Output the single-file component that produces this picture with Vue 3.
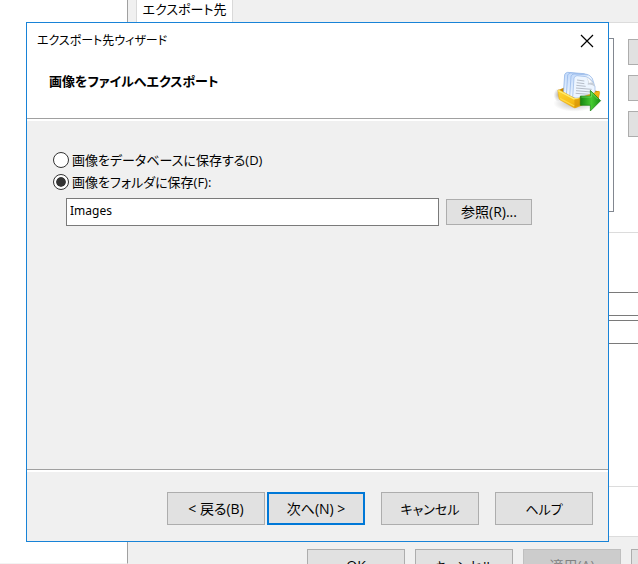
<script setup>
import { ref } from 'vue'

const target = ref('folder')
const folder = ref('Images')
</script>

<template>
  <div class="desktop">
    <div class="backdrop">
      <div class="side-pane"></div>
      <div class="settings">
        <div class="tab-bar">
          <button type="button" class="tab">エクスポート先</button>
        </div>
        <div class="page">
          <div class="list-row">
            <div class="list-box"></div>
            <div class="list-tools">
              <span class="tool"></span>
              <span class="tool"></span>
              <span class="tool"></span>
            </div>
          </div>
          <div class="group">
            <div class="field"></div>
            <div class="field"></div>
          </div>
          <div class="group-end"></div>
        </div>
        <div class="settings-footer">
          <button type="button" class="btn">OK</button>
          <button type="button" class="btn kana">キャンセル</button>
          <button type="button" class="btn" disabled>適用(A)</button>
          <span class="btn"></span>
        </div>
      </div>
    </div>

    <section class="dialog" role="dialog" aria-labelledby="dialog-title">
      <header class="dialog-header">
        <div class="title-bar">
          <span id="dialog-title">エクスポート先ウィザード</span>
          <button type="button" class="close" aria-label="閉じる">
            <svg width="14" height="14" viewBox="0 0 14 14">
              <path d="M1 1L13 13M13 1L1 13" stroke="#000" stroke-width="1.2" fill="none" />
            </svg>
          </button>
        </div>
        <div class="banner">
          <h1>画像をファイルへエクスポート</h1>
          <svg class="tray" width="50" height="44" viewBox="39 33 150 132" aria-hidden="true">
            <defs>
              <linearGradient id="gold" x1="0" y1="0" x2="1" y2="1">
                <stop offset="0" stop-color="#ffd83a" />
                <stop offset="0.5" stop-color="#f7bd16" />
                <stop offset="1" stop-color="#d28d00" />
              </linearGradient>
              <linearGradient id="green" x1="0" y1="0" x2="1" y2="0">
                <stop offset="0" stop-color="#168510" />
                <stop offset="0.55" stop-color="#47ca32" />
                <stop offset="1" stop-color="#189014" />
              </linearGradient>
              <linearGradient id="sheet" x1="0" y1="0" x2="1" y2="1">
                <stop offset="0" stop-color="#bdd6fa" />
                <stop offset="0.5" stop-color="#eef6ff" />
                <stop offset="1" stop-color="#c3d6ee" />
              </linearGradient>
              <radialGradient id="shade">
                <stop offset="0" stop-color="#8a8a8a" stop-opacity="0.6" />
                <stop offset="1" stop-color="#8a8a8a" stop-opacity="0" />
              </radialGradient>
            </defs>
            <ellipse cx="104" cy="130" rx="64" ry="25" fill="url(#shade)" />
            <ellipse cx="55" cy="105" rx="14" ry="20" fill="url(#shade)" />
            <path d="M54 91L78 80L178 94L176 116L103 126Z" fill="#c78500" />
            <path d="M70 103L74 44Q76 38 83 37L132 41Q147 46 148 62V112L100 115Z" fill="url(#sheet)" stroke="#81a9e2" stroke-width="2" />
            <path d="M79 106L83 45Q85 40 92 39L141 43Q154 49 155 65V112L105 115Z" fill="url(#sheet)" stroke="#8db1e5" stroke-width="2" />
            <path d="M89 110L93 48Q95 43 102 42L147 45Q159 52 161 68V112L110 115Z" fill="url(#sheet)" stroke="#8db1e5" stroke-width="2" />
            <path d="M98 112L102 54Q104 48 111 47L138 50Q159 58 165 80V114H106Z" fill="#edf5ff" stroke="#91b4e5" stroke-width="2" />
            <path d="M137 50Q158 58 165 81Q157 71 143 74Q147 59 137 50Z" fill="#c6cdd7" />
            <path d="M137 50Q150 56 158 68Q150 66 146 70Q147 58 137 50Z" fill="#f8fbff" />
            <path d="M111 60L133 63M110 68L133 71M109 76L137 79M108 84L155 88M108 92L153 96M107 100L148 103" stroke="#b6bdc8" stroke-width="3" />
            <path d="M53 91Q55 87 61 91L103 114Q108 117 114 115L176 94Q180 94 179 99L176 115L108 143Q104 145 99 142L60 120Q56 117 56 112Z" fill="url(#gold)" stroke="#d8960b" stroke-width="1" />
            <path d="M55 92L103 117L116 115" fill="none" stroke="#ffeb70" stroke-width="4" />
            <path d="M60 115L103 138" stroke="#ffd847" stroke-width="4" />
            <path d="M103 118L104 141L124 134V114Z" fill="#c98200" opacity="0.45" />
            <path d="M121 108H151V91L182 122L151 153V136H121Z" fill="url(#green)" stroke="#167e12" stroke-width="2" stroke-linejoin="round" />
            <path d="M124 111H154V98L173 117" fill="none" stroke="#83e66d" stroke-width="2" />
          </svg>
        </div>
      </header>

      <main class="dialog-body">
        <label class="choice">
          <input v-model="target" type="radio" name="target" value="database" />
          <span>画像をデータベースに保存する(D)</span>
        </label>
        <label class="choice">
          <input v-model="target" type="radio" name="target" value="folder" />
          <span>画像をフォルダに保存(F):</span>
        </label>
        <div class="folder-row">
          <input v-model="folder" type="text" class="folder" aria-label="フォルダ" />
          <button type="button" class="btn browse">参照(R)...</button>
        </div>
      </main>

      <footer class="dialog-footer">
        <div class="step-buttons">
          <button type="button" class="btn">&lt; 戻る(B)</button>
          <button type="button" class="btn primary">次へ(N) &gt;</button>
        </div>
        <button type="button" class="btn kana">キャンセル</button>
        <button type="button" class="btn kana">ヘルプ</button>
      </footer>
    </section>
  </div>
</template>

<style>
body {
  margin: 0;
}
</style>

<style scoped>
.desktop {
  position: relative;
  height: 100vh;
  overflow: hidden;
  background: #fff;
  color: #000;
  font-family: "Open Sans", "Noto Sans CJK JP", sans-serif;
  font-size: 14px;
  line-height: 20px;
  font-feature-settings: "palt";
}

.desktop * {
  box-sizing: border-box;
}

button,
input {
  font: inherit;
  font-feature-settings: inherit;
  color: inherit;
  margin: 0;
}

.btn {
  flex: none;
  width: 98px;
  height: 33px;
  padding: 0;
  border: 1px solid #adadad;
  border-radius: 0;
  background: #e1e1e1;
}

.btn:disabled {
  border-color: #bfbfbf;
  background: #ccc;
  color: #838383;
}

.btn.primary {
  border: 2px solid #0078d7;
}

.btn.kana {
  font-size: 13px;
}

.backdrop {
  display: flex;
  height: 100%;
}

.side-pane {
  flex: 0 0 128px;
  border-right: 1px solid #a0a0a0;
  border-bottom: 1px solid #f3f3f3;
}

.settings {
  flex: 1;
  min-width: 0;
  display: flex;
  flex-direction: column;
  background: #f0f0f0;
}

.tab-bar {
  display: flex;
  flex: 0 0 22px;
  padding-left: 8px;
}

.tab {
  width: 97px;
  padding: 0 0 4px;
  border: solid #d9d9d9;
  border-width: 0 1px;
  border-radius: 0;
  background: #fff;
  font-size: 13px;
  line-height: 18px;
}

.page {
  flex: 1;
  display: flex;
  flex-direction: column;
  padding-top: 15px;
  border: solid #dcdcdc;
  border-width: 1px 0;
  background: #fff;
}

.list-row {
  display: flex;
  gap: 14px;
  padding-left: 16px;
}

.list-box {
  flex: 1;
  height: 174px;
  border: 1px solid #828790;
}

.list-tools {
  flex: 0 0 10px;
  display: flex;
  flex-direction: column;
  gap: 10px;
  padding-top: 1px;
}

.tool {
  height: 26px;
  border: 1px solid #adadad;
  border-right: 0;
  background: #e1e1e1;
}

.group {
  flex: 1;
  display: flex;
  flex-direction: column;
  gap: 4px;
  margin-top: 20px;
  padding: 59px 0 0 16px;
  border: solid #dcdcdc;
  border-width: 1px 0;
}

.field {
  height: 24px;
  border: 1px solid #7a7a7a;
  border-right: 0;
}

.group-end {
  height: 49px;
}

.settings-footer {
  flex: 0 0 27px;
  display: flex;
  gap: 10px;
  padding: 12px 0 0 179px;
  overflow: hidden;
}

.dialog {
  position: absolute;
  inset: 22px 29px 22px 26px;
  display: flex;
  flex-direction: column;
  border: 1px solid #1883d7;
  background: #f0f0f0;
}

.dialog-header {
  height: 98px;
  background: #fff;
  border-bottom: 2px solid #fff;
}

.title-bar {
  display: flex;
  justify-content: space-between;
  align-items: center;
  height: 36px;
  padding: 0 14px 0 10px;
  font-size: 12px;
}

.close {
  display: flex;
  padding: 0;
  border: 0;
  background: none;
}

.banner {
  display: flex;
  justify-content: space-between;
  height: 60px;
  padding: 12px 5px 0 22px;
  border-bottom: 1px solid #a0a0a0;
}

h1 {
  margin: 0;
  font-size: 13px;
  line-height: 20px;
  font-weight: 700;
}

.dialog-body {
  flex: 1;
  padding: 28px 76px 0 26px;
}

.choice {
  display: flex;
  align-items: center;
  gap: 3px;
  width: max-content;
  height: 22px;
  font-size: 13px;
}

.choice input {
  appearance: none;
  width: 16px;
  height: 16px;
  border: 1px solid #333;
  border-radius: 50%;
  background: #fff;
}

.choice input:checked {
  padding: 2px;
  background: #333;
  background-clip: content-box;
  box-shadow: inset 0 0 0 2px #fff;
}

.folder-row {
  display: flex;
  align-items: center;
  gap: 7px;
  margin-top: 5px;
  padding-left: 13px;
}

.folder {
  flex: 1;
  min-width: 0;
  height: 28px;
  padding: 0 3px 4px;
  border: 1px solid #7a7a7a;
  border-radius: 0;
  background: #fff;
  font-family: "Noto Sans", sans-serif;
  font-size: 12px;
  outline: 0;
}

.browse {
  width: 86px;
  height: 26px;
}

.dialog-footer {
  display: flex;
  justify-content: flex-end;
  gap: 16px;
  height: 72px;
  padding: 22px 15px 0;
  border-top: 1px solid #a0a0a0;
  box-shadow: inset 0 2px 0 #fff;
}

.step-buttons {
  display: flex;
  gap: 2px;
}
</style>
